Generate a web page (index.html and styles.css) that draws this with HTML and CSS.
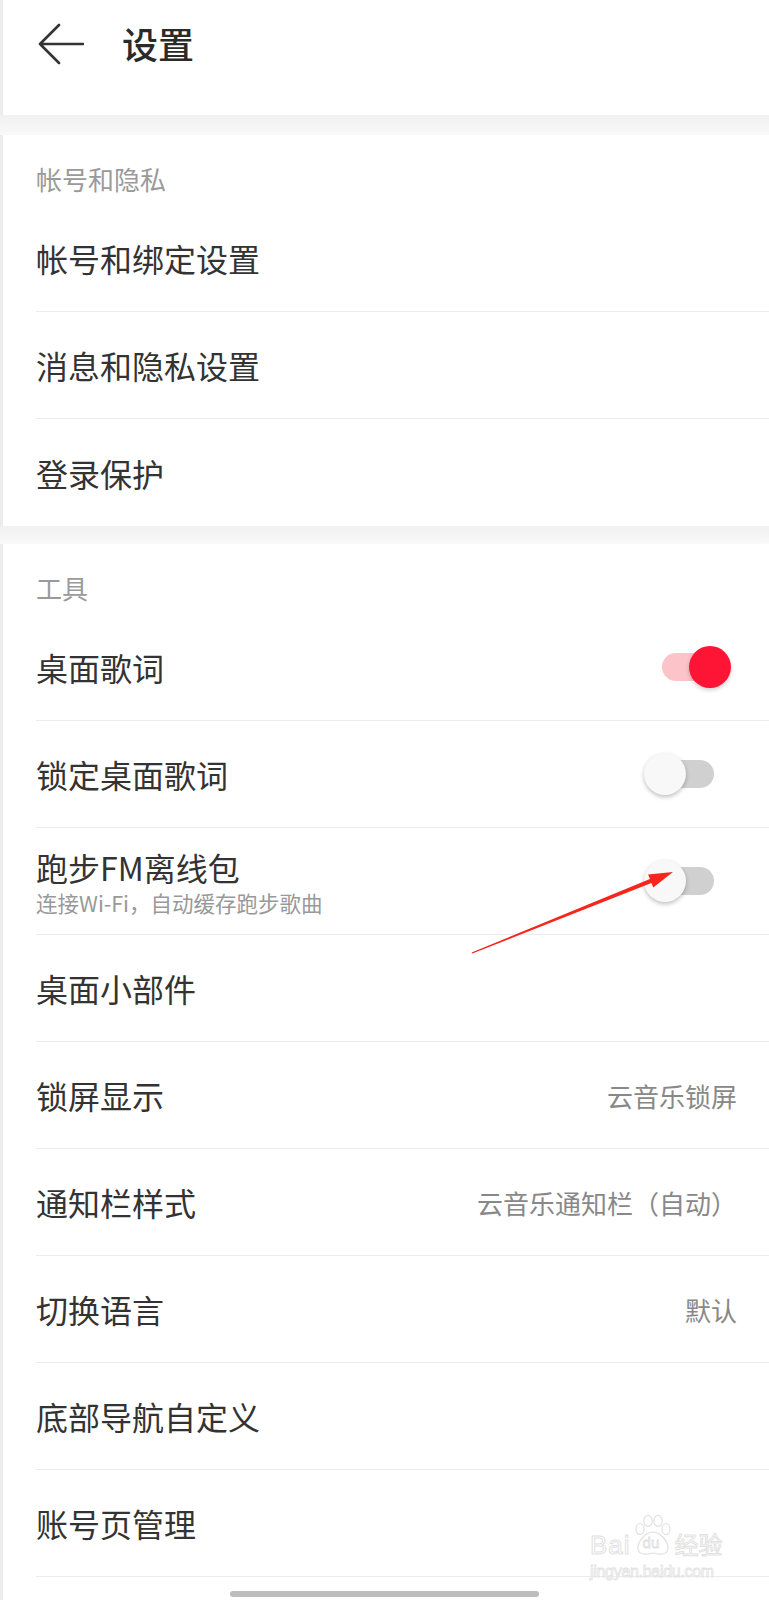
FILE: index.html
```html
<!DOCTYPE html>
<html lang="zh-CN">
<head>
    <meta charset="UTF-8">
    <meta name="viewport" content="width=device-width, initial-scale=1.0">
    <title>设置</title>
    <link rel="stylesheet" href="styles.css">
</head>
<body>
    <div class="page">
        <header class="topbar">
            <span class="back">
                <svg width="46" height="42" viewBox="0 0 46 42">
                    <path d="M21 2 L2 21 L21 40 M2 21 H45" fill="none" stroke="#333" stroke-width="2.6" stroke-linecap="round" stroke-linejoin="round"/>
                </svg>
            </span>
            <h1>设置</h1>
        </header>

        <div class="band"></div>

        <section class="group">
            <div class="group-title">帐号和隐私</div>
            <div class="item"><span class="label">帐号和绑定设置</span></div>
            <div class="item"><span class="label">消息和隐私设置</span></div>
            <div class="item flat"><span class="label">登录保护</span></div>
        </section>

        <div class="band thin"></div>

        <section class="group">
            <div class="group-title">工具</div>
            <div class="item">
                <span class="label">桌面歌词</span>
                <span class="switch on"><span class="knob"></span></span>
            </div>
            <div class="item">
                <span class="label">锁定桌面歌词</span>
                <span class="switch"><span class="knob"></span></span>
            </div>
            <div class="item">
                <div class="text">
                    <span class="label">跑步FM离线包</span>
                    <span class="sub">连接Wi-Fi，自动缓存跑步歌曲</span>
                </div>
                <span class="switch"><span class="knob"></span></span>
            </div>
            <div class="item"><span class="label">桌面小部件</span></div>
            <div class="item">
                <span class="label">锁屏显示</span>
                <span class="value">云音乐锁屏</span>
            </div>
            <div class="item">
                <span class="label">通知栏样式</span>
                <span class="value">云音乐通知栏（自动）</span>
            </div>
            <div class="item">
                <span class="label">切换语言</span>
                <span class="value">默认</span>
            </div>
            <div class="item"><span class="label">底部导航自定义</span></div>
            <div class="item"><span class="label">账号页管理</span></div>
        </section>

        <div class="home-bar"></div>

        <!-- red annotation arrow drawn over the screenshot -->
        <svg class="pointer" width="769" height="1600" viewBox="0 0 769 1600">
            <polygon points="471.6,952.6 649.9,879.1 648.1,874.5 673,872 653.3,887.5 651.4,882.9 472.3,953.6" fill="#f5271c"/>
        </svg>

        <div class="watermark">
            <div class="wm-logo">
                <span class="wm-bai">Bai</span>
                <span class="wm-paw">
                    <svg width="44" height="42" viewBox="0 0 44 42">
                        <g fill="#fff" stroke="#e0e0e0" stroke-width="1.2">
                            <ellipse cx="9" cy="14" rx="4" ry="5.5"/>
                            <ellipse cx="17" cy="6" rx="4.2" ry="5.5"/>
                            <ellipse cx="27" cy="6" rx="4.2" ry="5.5"/>
                            <ellipse cx="35" cy="14" rx="4" ry="5.5"/>
                            <path d="M22 17 C14 17 6 28 7 34 C8 40 15 40 22 38 C29 40 36 40 37 34 C38 28 30 17 22 17 Z"/>
                        </g>
                    </svg>
                    <span class="wm-du">du</span>
                </span>
                <span class="wm-jy">经验</span>
            </div>
            <div class="wm-url">jingyan.baidu.com</div>
        </div>
    </div>
</body>
</html>
```

FILE: styles.css
```css
body {
    margin: 0;
    padding: 0;
    background: #fff;
    font-family: "Noto Sans CJK SC", "Noto Sans", sans-serif;
    color: #333;
}

.page {
    position: relative;
    width: 769px;
    height: 1600px;
    overflow: hidden;
    box-shadow: inset 3px 0 0 #ececec;
}

.topbar {
    display: flex;
    align-items: center;
    height: 88px;
    padding-left: 38px;
    margin-bottom: 27px;
}

.back {
    display: flex;
    width: 46px;
    height: 42px;
}

.topbar h1 {
    margin: 0 0 0 38px;
    font-size: 36px;
    font-weight: 500;
    line-height: 1.2;
    color: #2a2a2a;
}

.band {
    height: 20px;
    background: linear-gradient(to bottom, #f1f1f1, #f4f4f4 40%, #f7f7f7 80%, #fafafa);
}

.band.thin {
    height: 18px;
}

.group-title {
    height: 70px;
    box-sizing: border-box;
    padding: 30px 0 0 36px;
    font-size: 26px;
    line-height: 28px;
    color: #9a9a9a;
}

.item {
    display: flex;
    align-items: center;
    justify-content: space-between;
    height: 107px;
    box-sizing: border-box;
    margin-left: 36px;
    padding-right: 32px;
    border-bottom: 1px solid #ebebeb;
}

.item.flat {
    border-bottom: none;
}

.label {
    font-size: 32px;
    line-height: 38px;
    color: #333;
}

.text {
    display: flex;
    flex-direction: column;
    gap: 5px;
}

.sub {
    font-size: 21.5px;
    line-height: 24px;
    color: #999;
}

.value {
    font-size: 26px;
    color: #888;
}

.switch {
    position: relative;
    width: 52px;
    height: 28px;
    margin-right: 23px;
    border-radius: 14px;
    background: #d0d0d0;
}

.switch .knob {
    position: absolute;
    top: -7px;
    left: -18px;
    width: 42px;
    height: 42px;
    border-radius: 50%;
    background: #f8f8f8;
    box-shadow: 0 2px 4px rgba(0, 0, 0, 0.25);
}

.switch.on {
    background: #fcc4c8;
}

.switch.on .knob {
    left: auto;
    right: -17px;
    background: #fe1434;
    box-shadow: 0 2px 4px rgba(0, 0, 0, 0.2);
}

.home-bar {
    width: 309px;
    height: 6px;
    margin: 14px auto 0;
    border-radius: 3px;
    background: #bdbdbd;
}

.pointer {
    position: absolute;
    top: 0;
    left: 0;
    pointer-events: none;
}

.watermark {
    position: absolute;
    left: 590px;
    top: 1515px;
    width: 140px;
    font-family: "Liberation Sans", Arial, sans-serif;
    color: #fff;
    -webkit-text-stroke: 1px #e2e2e2;
}

.wm-logo {
    display: flex;
    align-items: flex-end;
    height: 42px;
}

.wm-bai {
    font-size: 26px;
    line-height: 24px;
    letter-spacing: 1px;
}

.wm-paw {
    position: relative;
    width: 44px;
    height: 42px;
}

.wm-paw svg {
    display: block;
}

.wm-du {
    position: absolute;
    left: 12px;
    top: 20px;
    font-size: 15px;
    line-height: 16px;
    -webkit-text-stroke: 0.8px #dedede;
}

.wm-jy {
    font-family: "Noto Sans CJK SC", sans-serif;
    font-size: 24px;
    line-height: 26px;
}

.wm-url {
    margin-top: 6px;
    font-size: 16px;
    line-height: 18px;
    letter-spacing: -0.3px;
    -webkit-text-stroke: 0.8px #e2e2e2;
}
```
